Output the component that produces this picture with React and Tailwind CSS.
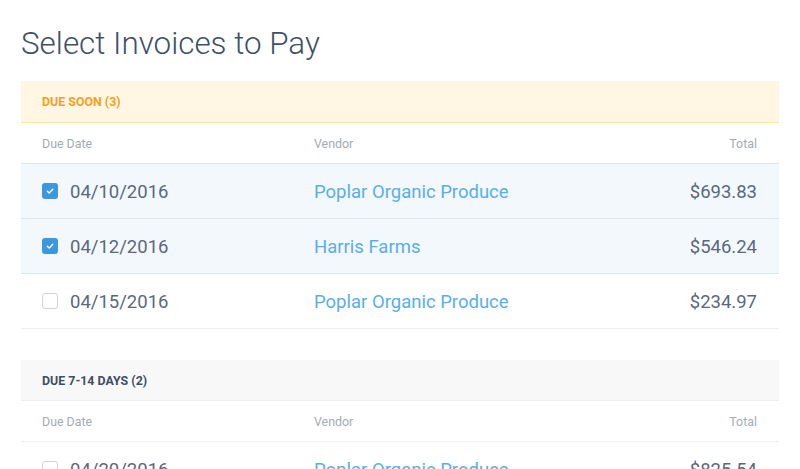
import React from "react";

const font = { fontFamily: "Roboto, 'Liberation Sans', sans-serif" };

function Checkbox({ checked }) {
  if (checked) {
    return (
      <span className="flex h-4 w-4 items-center justify-center rounded-[3px] bg-[#3b98e0]">
        <svg width="10" height="10" viewBox="0 0 10 10" fill="none">
          <path d="M2.3 5.2 L4.2 7 L7.8 3.3" stroke="white" strokeWidth="1.4" strokeLinecap="round" strokeLinejoin="round" />
        </svg>
      </span>
    );
  }
  return <span className="block h-4 w-4 rounded-[3px] border border-[#cdd3d8] bg-white" />;
}

function Row({ date, vendor, total, checked, borderClass }) {
  return (
    <div className={`flex h-[55px] items-center border-b ${borderClass} ${checked ? "bg-[#f3f8fd]" : "bg-white"}`}>
      <div className="flex w-[293px] items-center pl-[21px]">
        <Checkbox checked={checked} />
        <span className="ml-[12px] pt-[4px] text-[18.5px] text-[#5a697d]">{date}</span>
      </div>
      <div className="flex-1 pt-[4px] text-[18.5px] text-[#5aaeea]">{vendor}</div>
      <div className="pr-[22px] pt-[4px] text-right text-[18.5px] text-[#5a697d]">{total}</div>
    </div>
  );
}

function ColHeader({ borderClass }) {
  return (
    <div className={`flex h-[41px] items-center border-b ${borderClass} pt-[2px] text-[12.4px] text-[#a3acb2]`}>
      <div className="w-[293px] pl-[21px]">Due Date</div>
      <div className="flex-1">Vendor</div>
      <div className="pr-[22px]">Total</div>
    </div>
  );
}

export default function App() {
  return (
    <div className="h-[469px] w-[800px] overflow-hidden bg-white" style={font}>
      <div className="px-[21px]">
        <h1 className="mt-[26px] mb-[19px] text-[31.4px] font-light leading-[36px] text-[#3f5166]">
          Select Invoices to Pay
        </h1>

        <div className="flex h-[42px] items-center border-b border-[#ffe7a3] bg-[#fff7e3] pl-[21px] pt-[2px] text-[12.4px] font-bold text-[#f5a11f]">
          DUE SOON (3)
        </div>
        <ColHeader borderClass="border-[#d6e8f7]" />
        <Row date="04/10/2016" vendor="Poplar Organic Produce" total="$693.83" checked borderClass="border-[#d6e8f7]" />
        <Row date="04/12/2016" vendor="Harris Farms" total="$546.24" checked borderClass="border-[#d6e8f7]" />
        <Row date="04/15/2016" vendor="Poplar Organic Produce" total="$234.97" borderClass="border-[#eef0f2]" />

        <div className="mt-[31px] flex h-[41px] items-center border-b border-[#eceeef] bg-[#f8f8f8] pl-[21px] pt-[2px] text-[12.4px] font-bold text-[#3d4f63]">
          DUE 7-14 DAYS (2)
        </div>
        <ColHeader borderClass="border-[#eef0f2]" />
        <Row date="04/20/2016" vendor="Poplar Organic Produce" total="$825.54" borderClass="border-[#eef0f2]" />
      </div>
    </div>
  );
}
